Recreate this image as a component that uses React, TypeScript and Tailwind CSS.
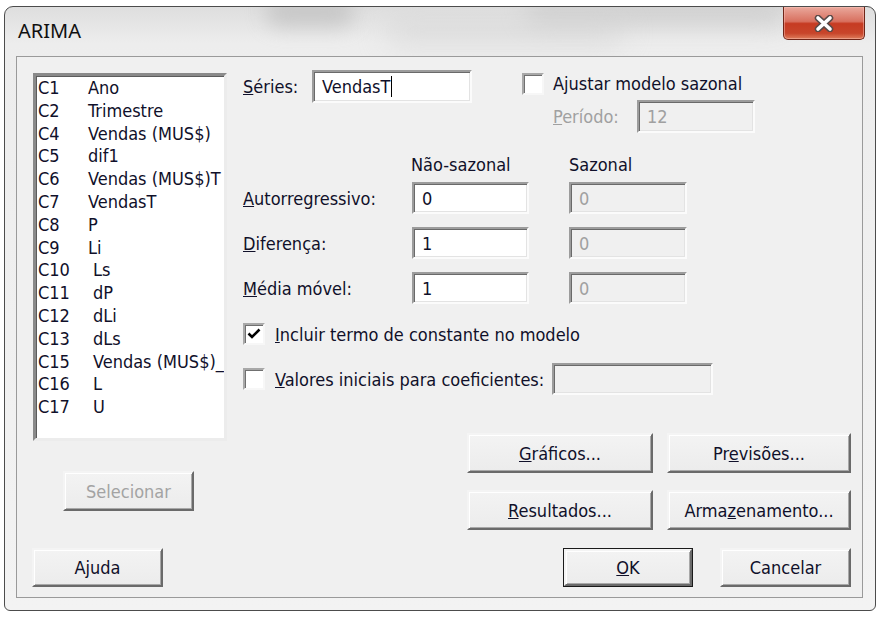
import React from "react";

const items: [string, string][] = [
  ["C1", "Ano"],
  ["C2", "Trimestre"],
  ["C4", "Vendas (MUS$)"],
  ["C5", "dif1"],
  ["C6", "Vendas (MUS$)T"],
  ["C7", "VendasT"],
  ["C8", "P"],
  ["C9", "Li"],
  ["C10", "Ls"],
  ["C11", "dP"],
  ["C12", "dLi"],
  ["C13", "dLs"],
  ["C15", "Vendas (MUS$)_"],
  ["C16", "L"],
  ["C17", "U"],
];

function Field({
  w,
  h,
  value,
  disabled,
  cursor,
}: {
  w: string;
  h: string;
  value?: string;
  disabled?: boolean;
  cursor?: boolean;
}) {
  return (
    <div
      className={`${w} ${h} flex items-center border-2 border-t-[#9c9c9c] border-l-[#9c9c9c] border-r-[#fbfbfb] border-b-[#fbfbfb] shadow-[inset_1px_1px_0_#6a6a6a,inset_-1px_-1px_0_#e3e3e3] pl-[8px] ${
        disabled ? "bg-[#f0f0f0] text-[#a0a0a0]" : "bg-white text-[#10102a]"
      }`}
    >
      <span>{value}</span>
      {cursor && <span className="inline-block w-[1px] h-[21px] bg-black ml-[1px]" />}
    </div>
  );
}

function Check({ checked }: { checked?: boolean }) {
  return (
    <div className="w-[22px] h-[22px] shrink-0 bg-white border-2 border-t-[#a8a8a8] border-l-[#a8a8a8] border-r-[#f7f7f7] border-b-[#f7f7f7] shadow-[inset_1px_1px_0_#707070] flex items-center justify-center">
      {checked && (
        <svg width="14" height="12" viewBox="0 0 14 12">
          <path d="M1.5 5.5 L5 9 L12.5 1.5" stroke="#000" strokeWidth="2.6" fill="none" />
        </svg>
      )}
    </div>
  );
}

function Btn({
  w,
  h,
  children,
  disabled,
  def,
}: {
  w: string;
  h: string;
  children: React.ReactNode;
  disabled?: boolean;
  def?: boolean;
}) {
  return (
    <div className={`${w} ${h} shrink-0 ${def ? "border border-[#1a1a1a]" : ""}`}>
      <div
        className={`w-full h-full flex items-center justify-center border-2 border-t-[#f4f4f4] border-l-[#f4f4f4] border-r-[#6a6a6a] border-b-[#6a6a6a] shadow-[inset_1px_1px_0_#ffffff,inset_-1px_-1px_0_#a8a8a8] bg-[linear-gradient(180deg,#f3f3f3_0%,#ececec_100%)] ${
          disabled ? "text-[#a3a3a3]" : "text-[#10102a]"
        }`}
      >
        {children}
      </div>
    </div>
  );
}

export default function App() {
  return (
    <div className="w-[881px] h-[619px] bg-white overflow-hidden font-['DejaVu_Sans_Condensed','DejaVu_Sans',sans-serif] text-[18px] text-[#10102a]">
      <div className="relative mt-[6px] ml-[4px] w-[872px] h-[605px] border border-[#4c4c4c] rounded-t-[9px] rounded-b-[6px] overflow-hidden bg-[linear-gradient(180deg,#dedede_0%,#ededed_6%,#f3f3f3_100%)] flex flex-col">
        <div className="absolute left-[260px] top-[-10px] w-[90px] h-[30px] rounded-full bg-[#bdbdbd] blur-[10px] opacity-70" />
        <div className="absolute left-[520px] top-[-12px] w-[260px] h-[30px] rounded-full bg-[#c6c6c6] blur-[12px] opacity-60" />
        <div className="absolute left-[380px] top-[10px] w-[240px] h-[30px] rounded-full bg-[#d2d2d2] blur-[14px] opacity-50" />
        <div className="relative h-[49px] flex items-start shrink-0">
          <div className="ml-[13px] mt-[11px] leading-[26px] text-[20px] font-['Noto_Sans',sans-serif] text-[#101010]">
            ARIMA
          </div>
          <div className="ml-auto mr-[10px] w-[82px] h-[33px] rounded-b-[5px] border border-t-0 border-[#6f2518] bg-[linear-gradient(180deg,#eaa89c_0%,#d8705f_45%,#c63b22_52%,#c8452b_82%,#de7d5c_100%)] shadow-[inset_0_0_0_1px_rgba(255,200,190,0.45)] flex items-center justify-center">
            <svg width="20" height="17" viewBox="0 0 20 17">
              <path d="M4 3 L16 14 M16 3 L4 14" stroke="#5a4a48" strokeWidth="6.5" strokeLinecap="round" />
              <path d="M4 3 L16 14 M16 3 L4 14" stroke="#ffffff" strokeWidth="3.6" strokeLinecap="round" />
            </svg>
          </div>
        </div>
        <div className="relative ml-[11px] w-[847px] h-[542px] border border-[#9a9a9a] bg-[#f0f0f0] flex">
          {/* left column */}
          <div className="w-[210px] pl-[16px] pt-[16px] flex flex-col shrink-0">
            <div className="w-[194px] h-[368px] bg-white border-[3px] border-t-[#8a8a8a] border-l-[#8a8a8a] border-r-[#ececec] border-b-[#ececec] shadow-[inset_1px_1px_0_#5c5c5c] pt-[1px] pl-[2px] overflow-hidden">
              {items.map(([c, n]) => (
                <div key={c} className="flex leading-[22.8px] whitespace-nowrap">
                  <span className={c.length > 2 ? "w-[55px] shrink-0" : "w-[50px] shrink-0"}>{c}</span>
                  <span>{n}</span>
                </div>
              ))}
            </div>
            <div className="mt-[30px] ml-[30px]">
              <Btn w="w-[131px]" h="h-[40px]" disabled>
                Selecionar
              </Btn>
            </div>
            <div className="mt-[37px] ml-[-1px]">
              <Btn w="w-[131px]" h="h-[39px]">
                Ajuda
              </Btn>
            </div>
          </div>
          {/* right column */}
          <div className="ml-[16px] pt-[13px] flex flex-col w-[608px]">
            <div className="flex items-start h-[33px]">
              <div className="w-[69px] h-[33px] flex items-center">
                <span>
                  <u>S</u>éries:
                </span>
              </div>
              <Field w="w-[160px]" h="h-[33px]" value="VendasT" cursor />
              <div className="ml-[50px] mt-[3px]">
                <Check />
              </div>
              <div className="ml-[9px] h-[27px] flex items-center">
                <span>
                  A<u>j</u>ustar modelo sazonal
                </span>
              </div>
            </div>
            <div className="flex items-center h-[33px] mt-[-3px] ml-[310px]">
              <div className="w-[84px] text-[#a0a0a0]">
                <u>P</u>eríodo:
              </div>
              <Field w="w-[118px]" h="h-[33px]" value="12" disabled />
            </div>
            <div className="flex h-[20px] leading-[20px] mt-[22px]">
              <div className="w-[168px]" />
              <div className="w-[158px]">Não-sazonal</div>
              <div>Sazonal</div>
            </div>
            {[
              ["A", "utorregressivo:", "0"],
              ["D", "iferença:", "1"],
              ["M", "édia móvel:", "1"],
            ].map(([u, rest, v], i) => (
              <div key={i} className={`flex items-center h-[32px] ${i === 0 ? "mt-[7px]" : "mt-[13px]"}`}>
                <div className="w-[169px]">
                  <u>{u}</u>
                  {rest}
                </div>
                <Field w="w-[117px]" h="h-[32px]" value={v} />
                <div className="ml-[40px]">
                  <Field w="w-[118px]" h="h-[32px]" value="0" disabled />
                </div>
              </div>
            ))}
            <div className="flex items-center h-[22px] mt-[19px]">
              <Check checked />
              <div className="ml-[10px]">
                <u>I</u>ncluir termo de constante no modelo
              </div>
            </div>
            <div className="flex items-center h-[32px] mt-[18px]">
              <Check />
              <div className="ml-[10px] w-[277px] whitespace-nowrap">
                <u>V</u>alores iniciais para coeficientes:
              </div>
              <Field w="w-[161px]" h="h-[32px]" disabled />
            </div>
            <div className="flex mt-[38px] ml-[224px]">
              <Btn w="w-[186px]" h="h-[40px]">
                <span>
                  <u>G</u>ráficos...
                </span>
              </Btn>
              <div className="ml-[14px]">
                <Btn w="w-[184px]" h="h-[40px]">
                  <span>
                    Pr<u>e</u>visões...
                  </span>
                </Btn>
              </div>
            </div>
            <div className="flex mt-[17px] ml-[224px]">
              <Btn w="w-[186px]" h="h-[40px]">
                <span>
                  <u>R</u>esultados...
                </span>
              </Btn>
              <div className="ml-[14px]">
                <Btn w="w-[184px]" h="h-[40px]">
                  <span>
                    Arma<u>z</u>enamento...
                  </span>
                </Btn>
              </div>
            </div>
            <div className="flex mt-[18px] ml-[320px]">
              <Btn w="w-[130px]" h="h-[39px]" def>
                <span>
                  <u>O</u>K
                </span>
              </Btn>
              <div className="ml-[27px]">
                <Btn w="w-[131px]" h="h-[39px]">
                  Cancelar
                </Btn>
              </div>
            </div>
          </div>
        </div>
      </div>
    </div>
  );
}
